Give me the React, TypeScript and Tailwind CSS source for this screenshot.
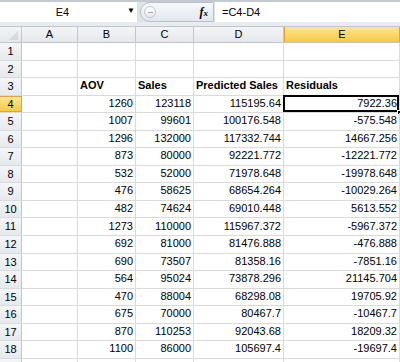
const rows: (string | number)[][] = [
  [],
  [],
  ["AOV", "Sales", "Predicted Sales", "Residuals"],
  ["1260", "123118", "115195.64", "7922.36"],
  ["1007", "99601", "100176.548", "-575.548"],
  ["1296", "132000", "117332.744", "14667.256"],
  ["873", "80000", "92221.772", "-12221.772"],
  ["532", "52000", "71978.648", "-19978.648"],
  ["476", "58625", "68654.264", "-10029.264"],
  ["482", "74624", "69010.448", "5613.552"],
  ["1273", "110000", "115967.372", "-5967.372"],
  ["692", "81000", "81476.888", "-476.888"],
  ["690", "73507", "81358.16", "-7851.16"],
  ["564", "95024", "73878.296", "21145.704"],
  ["470", "88004", "68298.08", "19705.92"],
  ["675", "70000", "80467.7", "-10467.7"],
  ["870", "110253", "92043.68", "18209.32"],
  ["1100", "86000", "105697.4", "-19697.4"],
  [],
];

const cols = [
  { name: "A", w: "w-[56px]" },
  { name: "B", w: "w-[58px]" },
  { name: "C", w: "w-[58px]" },
  { name: "D", w: "w-[90px]" },
  { name: "E", w: "w-[116px]" },
];

function Cell({ w, value, header, selected }: { w: string; value?: string | number; header: boolean; selected?: boolean }) {
  return (
    <div
      className={`${w} relative flex h-full shrink-0 items-end overflow-visible whitespace-nowrap border-r border-[#d8dadc] pb-[1px] ${
        header ? "justify-start pl-[2px] font-bold text-[11px]" : "justify-end pr-[2px] text-[11px]"
      }`}
    >
      {value}
      {selected && (
        <>
          <div className="absolute -left-[1px] -top-[1px] h-[calc(100%+1px)] w-[calc(100%+1px)] border-2 border-black" />
          <div className="absolute -bottom-[3px] -right-[3px] h-[5px] w-[5px] border border-white bg-black" />
        </>
      )}
    </div>
  );
}

export default function App() {
  return (
    <div
      className="h-[362px] w-[400px] overflow-hidden bg-white text-black"
      style={{ fontFamily: "'Liberation Sans', Arial, sans-serif" }}
    >
      <div className="h-[2px] bg-[#c3c9d1]" />
      <div className="flex h-[20px] items-stretch bg-[#dfe3e8]">
        <div className="relative flex w-[137px] items-center justify-center bg-white text-[11px]">
          <span className="-ml-[12px]">E4</span>
          <span className="absolute left-[127px] top-[5px] text-[8px] leading-none">▼</span>
        </div>
        <div className="ml-[3px] flex w-[74px] items-center justify-between rounded-l-[10px] border border-[#b9c0c8] bg-gradient-to-b from-[#f7f8fa] to-[#e3e7ec] pl-[3px] pr-[5px]">
          <div className="flex h-[12px] w-[12px] items-center justify-center rounded-full border border-[#c2c8cf] bg-gradient-to-b from-white to-[#e6e9ed]">
            <div className="h-[1px] w-[5px] bg-[#9aa3ad]" />
          </div>
          <span className="font-bold italic text-[12px]" style={{ fontFamily: "'Liberation Serif', serif" }}>
            f<span className="text-[9px]">x</span>
          </span>
        </div>
        <div className="ml-[1px] flex flex-1 items-center bg-white pl-[7px] text-[11px]">=C4-D4</div>
      </div>
      <div className="h-[5px] border-b border-[#c0c5cb] bg-[#e8ebef]" />
      <div className="flex h-[16px] border-b border-[#c0c5cb] text-[11px]">
        <div className="relative w-[22px] shrink-0 border-r border-[#c0c5cb] bg-gradient-to-b from-[#f4f5f7] to-[#e4e7eb]">
          <svg className="absolute bottom-[2px] right-[3px]" width="9" height="9" viewBox="0 0 9 9">
            <polygon points="9,0 9,9 0,9" fill="#d6dadf" />
          </svg>
        </div>
        {cols.map((c) =>
          c.name === "E" ? (
            <div
              key={c.name}
              className={`${c.w} flex shrink-0 items-center justify-center border-x border-[#e2a43a] bg-gradient-to-b from-[#fde68e] to-[#f7c944]`}
            >
              {c.name}
            </div>
          ) : (
            <div
              key={c.name}
              className={`${c.w} flex shrink-0 items-center justify-center border-r border-[#c0c5cb] bg-gradient-to-b from-[#f4f5f7] to-[#e4e7eb]`}
            >
              {c.name}
            </div>
          )
        )}
      </div>
      {rows.map((r, i) => (
        <div key={i} className="flex h-[17.55px] border-b border-[#d8dadc]">
          {i === 3 ? (
            <div className="flex w-[22px] shrink-0 items-center justify-center border-y border-r border-[#e2a43a] bg-gradient-to-b from-[#fde68e] to-[#f7c944] text-[11px]">
              {i + 1}
            </div>
          ) : (
            <div className="flex w-[22px] shrink-0 items-center justify-center border-r border-[#c0c5cb] bg-gradient-to-b from-[#f4f5f7] to-[#e6e9ed] text-[11px]">
              {i < 18 ? i + 1 : ""}
            </div>
          )}
          <Cell w={cols[0].w} header={false} />
          {cols.slice(1).map((c, j) => (
            <Cell key={c.name} w={c.w} value={r[j]} header={i === 2} selected={i === 3 && j === 3} />
          ))}
        </div>
      ))}
    </div>
  );
}
